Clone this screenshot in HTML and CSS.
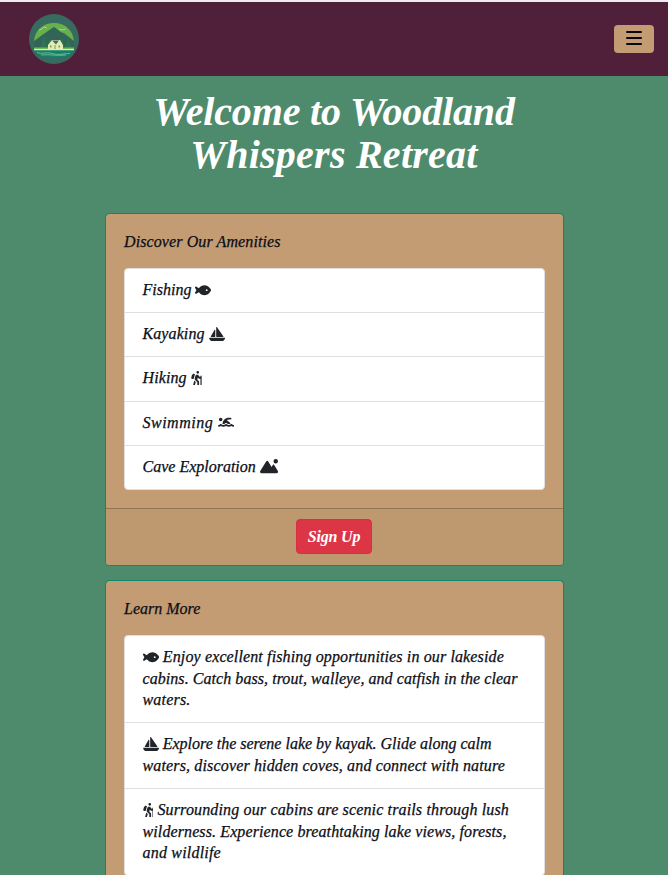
FILE: index.html
```
<!DOCTYPE html>
<html lang="en">
<head>
<meta charset="utf-8">
<title>Woodland Whispers Retreat</title>
<link rel="stylesheet" href="styles.css">
</head>
<body>
<svg class="sprite" aria-hidden="true">
  <symbol id="fish" viewBox="0 0 576 512"><path d="M180.5 141.5C219.7 108.5 272.6 80 336 80s116.3 28.5 155.5 61.5c39.1 33 66.9 72.4 81 99.8c4.7 9.2 4.7 20.1 0 29.3c-14.1 27.4-41.9 66.8-81 99.8C452.3 403.5 399.4 432 336 432s-116.3-28.5-155.5-61.5c-16.2-13.7-30.5-28.5-42.7-43.1L48.1 379.6c-12.5 7.3-28.4 5.3-38.7-4.9S-3 348.7 4.2 336.1L50 256 4.2 175.9c-7.2-12.6-5-28.4 5.3-38.6s26.1-12.2 38.7-4.9l89.7 52.3c12.2-14.6 26.5-29.4 42.7-43.1zM448 256a32 32 0 1 0 -64 0 32 32 0 1 0 64 0z"/></symbol>
  <symbol id="sailboat" viewBox="0 0 576 512"><path d="M256 16c0-7 4.5-13.2 11.2-15.3s13.9 .4 17.9 6.1l224 320c3.4 4.9 3.8 11.3 1.1 16.6s-8.2 8.6-14.2 8.6H272c-8.8 0-16-7.2-16-16V16zM212.1 96.5c7 1.9 11.9 8.2 11.9 15.5V336c0 8.8-7.2 16-16 16H80c-5.7 0-11-3-13.8-8s-2.9-11-.1-16l128-224c3.6-6.3 11-9.4 18-7.5zM5.7 404.3C2.8 394.1 10.5 384 21.1 384H554.9c10.6 0 18.3 10.1 15.4 20.3l-4 14.3C550.7 473.9 500.4 512 443 512H133C75.6 512 25.3 473.9 9.7 418.7l-4-14.3z"/></symbol>
  <symbol id="hiking" viewBox="0 0 384 512"><path d="M192 48a48 48 0 1 1 96 0 48 48 0 1 1 -96 0zm51.3 182.7L224.2 307l49.7 49.7c9 9 14.1 21.2 14.1 33.9V480c0 17.7-14.3 32-32 32s-32-14.3-32-32V397.3l-73.9-73.9c-15.8-15.8-22.2-38.6-16.9-60.3l20.4-84c8.3-34.1 42.7-54.9 76.7-46.4c19 4.8 35.6 16.4 46.4 32.7L305.1 208H336V184c0-13.3 10.7-24 24-24s24 10.7 24 24V488c0 13.3-10.7 24-24 24s-24-10.7-24-24V272H296.6c-16 0-31-8-39.9-21.4l-13.3-20zM81.1 471.9L117.3 334c3 4.2 6.4 8.2 10.1 11.9l41.9 41.9L142.9 488.1c-4.5 17.1-22 27.3-39.1 22.8s-27.3-22-22.8-39.1zm55.5-346L101.4 266.5c-3 12.1-14.9 19.9-27.2 17.9l-47.9-8c-14-2.3-22.9-16.3-19.2-30L31.9 155c9.5-34.8 41.1-59 77.2-59h4.2c15.6 0 27.1 14.7 23.3 29.8z"/></symbol>
  <symbol id="swimming" viewBox="0 0 576 512"><path d="M309.5 178.4L447.9 297.1c-1.6 .9-3.2 2-4.8 3c-18 12.4-40.1 20.3-59.2 20.3c-19.6 0-40.8-7.7-59.2-20.3c-22.1-15.5-51.6-15.5-73.7 0c-17.1 11.8-38 20.3-59.2 20.3c-10.1 0-21.1-2.2-31.9-6.2C163.1 193.2 262.2 96 384 96h64c17.7 0 32 14.3 32 32s-14.3 32-32 32H384c-26.9 0-52.3 6.6-74.5 18.4zM160 160A64 64 0 1 1 32 160a64 64 0 1 1 128 0zM306.5 325.9C329 341.4 356.5 352 384 352c26.9 0 55.4-10.8 77.4-26.1c11.9-8.5 28.1-7.8 39.2 1.7c14.4 11.9 32.5 21 50.6 25.2c17.2 4 27.9 21.2 23.9 38.4s-21.2 27.9-38.4 23.9c-24.5-5.7-44.9-16.5-58.2-25C449.5 405.7 417 416 384 416c-31.9 0-60.6-9.9-80.4-18.9c-5.8-2.7-11.1-5.3-15.6-7.7c-4.5 2.4-9.7 5.1-15.6 7.7c-19.8 9-48.5 18.9-80.4 18.9c-33 0-65.5-10.3-94.5-25.8c-13.4 8.4-33.7 19.3-58.2 25c-17.2 4-34.4-6.7-38.4-23.9s6.7-34.4 23.9-38.4c18.1-4.2 36.2-13.3 50.6-25.2c11.1-9.4 27.3-10.1 39.2-1.7C136.7 341.2 165.1 352 192 352c27.5 0 55-10.6 77.5-26.1c11.1-7.9 25.9-7.9 37 0z"/></symbol>
  <symbol id="mountain" viewBox="0 0 640 512"><path d="M560 160A80 80 0 1 0 560 0a80 80 0 1 0 0 160zM55.9 512H578.9c33.8 0 61.1-27.4 61.1-61.1c0-11.2-3.1-22.2-8.9-31.8l-132-216.3C495 196.1 487.8 192 480 192s-15 4.1-19.1 10.7l-48.2 79L286.8 81c-6.6-10.6-18.3-17-30.8-17s-24.1 6.4-30.8 17L8.6 426.4C3 435.3 0 445.6 0 456.1C0 487 25 512 55.9 512z"/></symbol>
</svg>
<header class="navbar">
  <svg class="logo" viewBox="0 0 50 50" role="img" aria-label="Woodland Whispers Retreat logo">
    <circle cx="25" cy="25" r="25" fill="#376b60"/>
    <path d="M5 27C6 16 14 9 25 9s19 7 20 18L35 19l-4-1-6-5-12 8z" fill="#68b04b"/>
    <path d="m10 16 3-1 2-2 3 1M30 15l3 1 4-1" stroke="#a9d27c" stroke-width="1" fill="none"/>
    <path d="M5 28 25 13l20 15v7H5z" fill="#326457"/>
    <path d="m11 34 4-12 3 12zM17 34l4-10 2 10zM31 32l2-9 3 11zM36 34l3-10 4 10z" fill="#2f7350"/>
    <path d="M5 33.5h40v2H5z" fill="#77ba55"/>
    <path d="M5 36h40c-4 6-11 8-20 8S9 42 5 36z" fill="#168067"/>
    <path d="M5 35.7h40" stroke="#d5edc0" stroke-width="1.2"/>
    <path d="M8 38.5c6 2 8-1 15 1s11 0 18 0M12 41c8-1 14 1 25 0" stroke="#7cc5a0" stroke-width=".8" fill="none"/>
    <path d="m19 31 4-5h8l3 5v4H19z" fill="#e1edb5"/>
    <path d="M23 26.5h7l-3 4z" fill="#526260"/>
    <path d="M21 31.5h1.5v2H21zM25.5 31h1v4h-1zM29.5 31.5h1.5v2h-1.5z" fill="#769b60"/>
  </svg>
  <button class="toggler" aria-label="Menu"><i></i><i></i><i></i></button>
</header>
<main>
  <h1><span class="h-a">Welcome to Woodland</span><span class="h-b">Whispers Retreat</span></h1>
  <section class="card">
    <div class="card-body">
      <h2 class="t1">Discover Our Amenities</h2>
      <ul>
        <li><span class="line">Fishing <svg class="icon"><use href="#fish"/></svg></span></li>
        <li><span class="line a2">Kayaking <svg class="icon"><use href="#sailboat"/></svg></span></li>
        <li><span class="line a3">Hiking <svg class="icon narrow"><use href="#hiking"/></svg></span></li>
        <li><span class="line a4">Swimming <svg class="icon"><use href="#swimming"/></svg></span></li>
        <li><span class="line">Cave Exploration <svg class="icon wide"><use href="#mountain"/></svg></span></li>
      </ul>
    </div>
    <footer><button class="signup">Sign Up</button></footer>
  </section>
  <section class="card">
    <div class="card-body">
      <h2>Learn More</h2>
      <ul>
        <li><span class="line b1"><svg class="icon"><use href="#fish"/></svg> Enjoy excellent fishing opportunities in our lakeside</span>
          <span class="line b2">cabins. Catch bass, trout, walleye, and catfish in the clear</span>
          <span class="line b3">waters.</span></li>
        <li><span class="line"><svg class="icon"><use href="#sailboat"/></svg> Explore the serene lake by kayak. Glide along calm</span>
          <span class="line b5">waters, discover hidden coves, and connect with nature</span></li>
        <li><span class="line b6"><svg class="icon narrow"><use href="#hiking"/></svg> Surrounding our cabins are scenic trails through lush</span>
          <span class="line b7">wilderness. Experience breathtaking lake views, forests,</span>
          <span class="line b8">and wildlife</span></li>
      </ul>
    </div>
  </section>
</main>
</body>
</html>
```
FILE: styles.css
```
* { box-sizing: border-box; }
html { height: 100%; overflow: hidden; }
body {
  margin: 0; height: 100%; overflow: hidden; background: #4e8b6c; color: #0b0d16;
  font: italic 16px/21.6px "Liberation Serif", serif;
}
.sprite { display: none; }
.navbar {
  display: flex; align-items: center; justify-content: space-between;
  height: 76px; padding: 0 14px 0 29px;
  background: #50203a; border-top: 2px solid #eeeaf0;
}
.logo { width: 50px; height: 50px; }
.toggler {
  display: flex; flex-direction: column; align-items: center; justify-content: center; gap: 4px;
  width: 40px; height: 28px; padding: 0 0 2px; border: 0; border-radius: 4px; background: #c49c73;
}
.toggler i { width: 16px; height: 2px; border-radius: 1px; background: #090909; }
main { width: 459px; margin: 14px 0 0 105px; }
h1 {
  margin: 0 1px 36.6px 0; text-align: center; color: #fff;
  font-size: 40px; font-weight: 700; line-height: 43.2px; white-space: nowrap;
}
h1 span { display: block; }
.h-a { letter-spacing: -.15px; }
.h-b { letter-spacing: .25px; }
.card {
  margin-bottom: 14px; border: 1px solid #0c8a6b; border-radius: 4px;
  background: #c49c73 padding-box;
}
.card-body { padding: 18px; }
h2 { margin: -.7px 0 15.1px; font-size: 16px; font-weight: 400; line-height: 21.6px; white-space: nowrap; -webkit-text-stroke: .25px; }
.t1 { letter-spacing: .1px; }
ul { margin: 0; padding: 0; list-style: none; border: 1px solid #dfdfdf; border-radius: 4px; background: #fff; }
li { padding: 10px 17.5px 11.6px; border-top: 1px solid #dfdfdf; }
li:first-child { border-top: 0; }
.line { display: block; height: 21.6px; white-space: nowrap; -webkit-text-stroke: .25px; }
.a2, .a3 { letter-spacing: .1px; }
.a4 { letter-spacing: .5px; }
.b1 { letter-spacing: .13px; }
.b2 { letter-spacing: .06px; }
.b3 { letter-spacing: .2px; }
.b5, .b6 { letter-spacing: .15px; }
.b7 { letter-spacing: .11px; }
.b8 { letter-spacing: .2px; }
.icon { width: 16.2px; height: 14.4px; vertical-align: -2px; fill: #212529; -webkit-text-stroke: 0; }
.narrow { width: 10.8px; }
.wide { width: 18px; }
footer {
  display: flex; justify-content: center; padding: 10px 19px 11px 18px;
  border-top: 1px solid #8f7458; border-radius: 0 0 3px 3px; background: #be986e;
}
.signup {
  width: 76px; height: 35px; padding: 0; border: 1px solid #d82f42; border-radius: 4px;
  background: #dc3545; color: #fff; font: italic 700 16px/21.6px "Liberation Serif", serif; letter-spacing: -.2px;
}
```
